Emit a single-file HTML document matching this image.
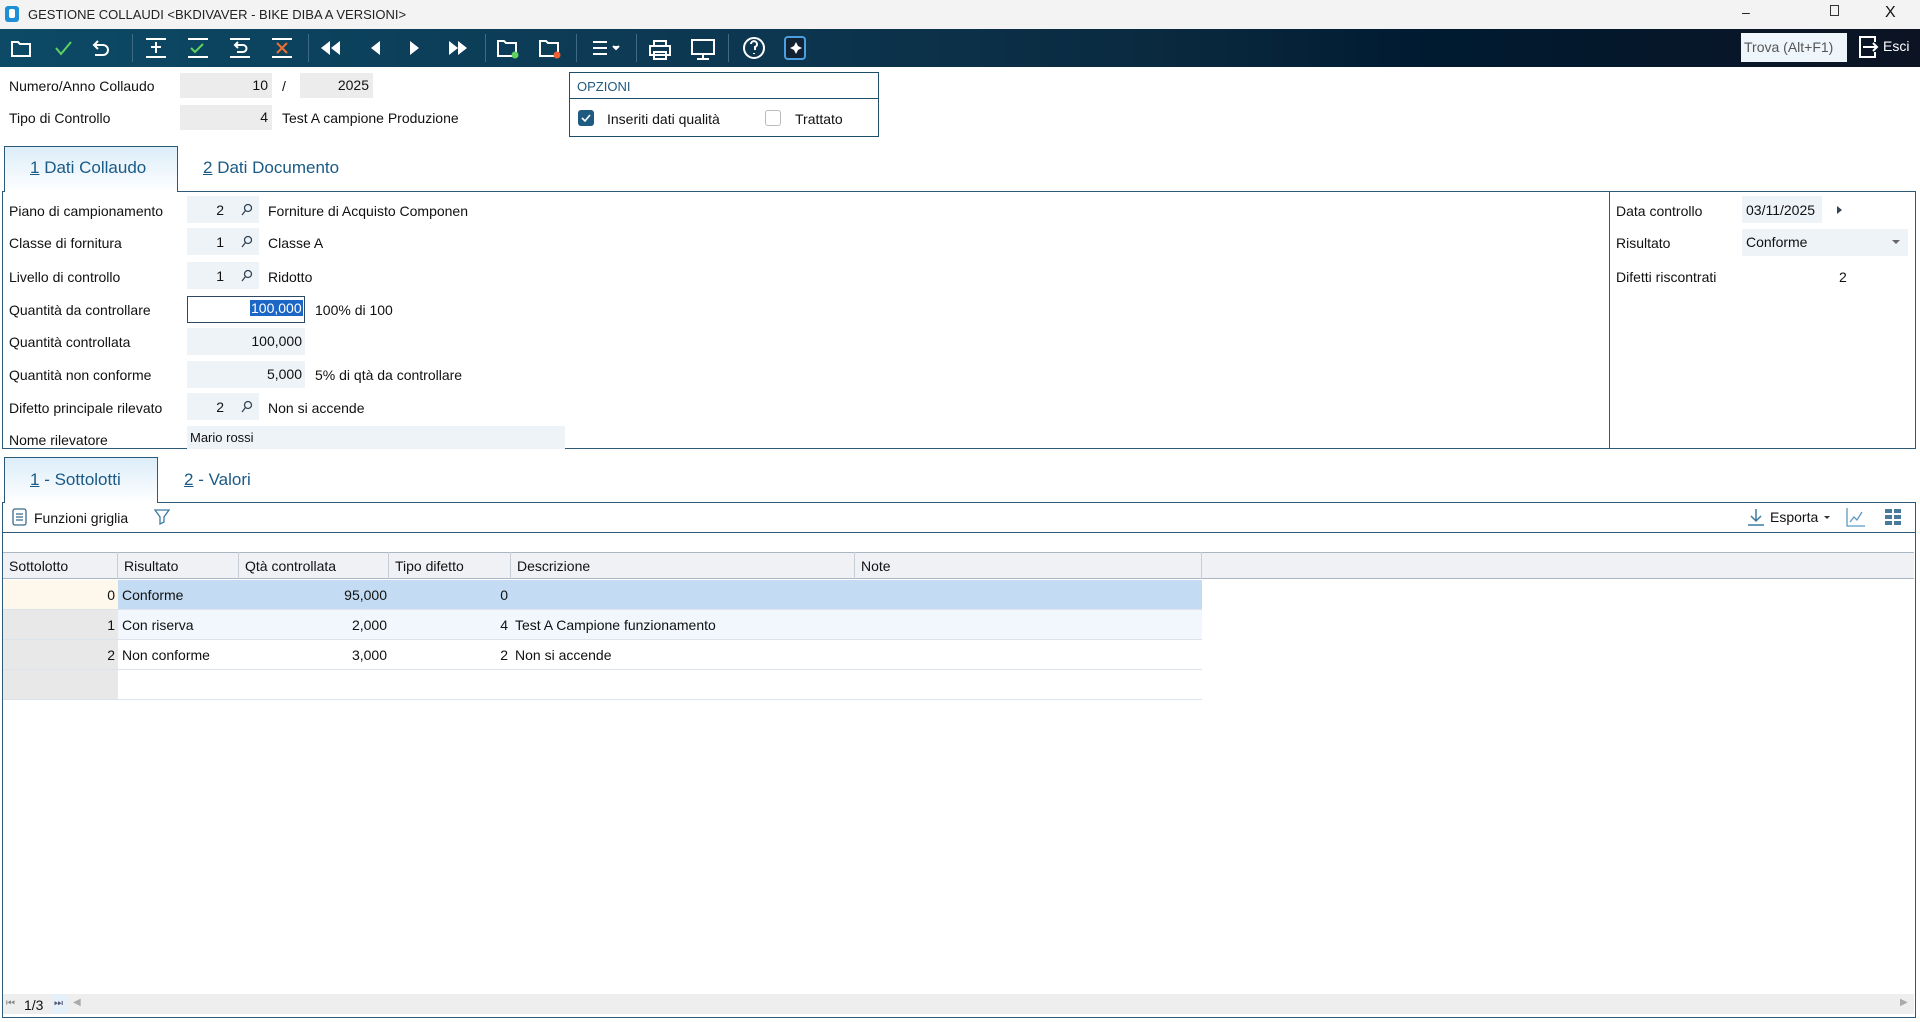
<!DOCTYPE html>
<html><head><meta charset="utf-8">
<style>
*{box-sizing:border-box;margin:0;padding:0}
body{width:1920px;height:1022px;overflow:hidden;background:#fff;font-family:"Liberation Sans",sans-serif;font-size:14px;color:#111;position:relative}
.a{position:absolute;white-space:nowrap}
.box{position:absolute;background:#eef3f8}
.r{text-align:right}
.sep{position:absolute;top:34px;width:1px;height:28px;background:#3e6a82}
.lbl{position:absolute;left:9px}
.mag{position:absolute}
.hdr{position:absolute;top:552px;height:27px;border-right:1px solid #c7ced6;padding:6px 0 0 6px}
.cell{position:absolute;height:30px;padding-top:7px}
</style></head><body>
<div class="a" style="left:0;top:0;width:1920px;height:29px;background:#f3f3f3"></div>
<div class="a" style="left:5px;top:6px;width:14px;height:16px;background:#1e8fd6;border-radius:3px"></div>
<div class="a" style="left:9px;top:9px;width:6px;height:9px;background:#fff;border-radius:2px"></div>
<div class="a" style="left:28px;top:7px;font-size:13px;color:#222">GESTIONE COLLAUDI &lt;BKDIVAVER - BIKE DIBA A VERSIONI&gt;</div>
<div class="a" style="left:1742px;top:4px;font-size:14px">–</div>
<div class="a" style="left:1830px;top:5px;width:9px;height:11px;border:1.5px solid #333"></div>
<div class="a" style="left:1885px;top:4px;font-size:16px">X</div>
<div class="a" style="left:0;top:29px;width:1920px;height:38px;background:linear-gradient(90deg,#0c4a66 0%,#0d3650 40%,#0a2a40 60%,#001a30 75%,#0c1424 100%)"></div>
<svg class="a" style="left:0;top:29px" width="820" height="38" fill="none" stroke="#fff" stroke-width="2">
<path d="M12 13h6l2 2h10v12H12z"/>
<path d="M56 19l5 6 10-12" stroke="#5fd35f"/>
<path d="M98 12l-4 4 4 4M94 16h9a5 5 0 0 1 0 10h-8"/>
<path d="M146 10h20M146 28h20M156 13v11M151 18h10"/>
<path d="M188 10h20M188 28h20"/>
<path d="M191 19l4 4 8-8" stroke="#5fd35f"/>
<path d="M230 10h20M230 28h20M238 13l-3 3 3 3M235 16h8a3 3 0 0 1 0 7h-6"/>
<path d="M272 10h20M272 28h20" /><path d="M277 14l10 10M287 14l-10 10" stroke="#f07030"/>
<path d="M330 12v14l-9-7zM340 12v14l-9-7z" fill="#fff" stroke="none"/>
<path d="M380 12v14l-9-7z" fill="#fff" stroke="none"/>
<path d="M410 12v14l9-7z" fill="#fff" stroke="none"/>
<path d="M449 12v14l9-7zM458 12v14l9-7z" fill="#fff" stroke="none"/>
<path d="M498 12h6l2 2h10v13H498z"/><circle cx="515" cy="26" r="3.5" fill="#5fd35f" stroke="none"/>
<path d="M540 12h6l2 2h10v13H540z"/><circle cx="557" cy="26" r="3.5" fill="#f06030" stroke="none"/>
<path d="M593 13h14M593 19h14M593 25h14"/><path d="M613 17l3 3 3-3" fill="#fff"/>
<path d="M654 12h12v5h-12zM650 17h20v9h-20zM654 23h12v7h-12z"/>
<path d="M692 11h22v14h-22zM703 25v4M697 30h12"/>
<circle cx="754" cy="19" r="10"/><path d="M751 15a3 3 0 1 1 4 3v3M754 24v1"/>
<rect x="785" y="8" width="20" height="22" rx="3" stroke="#4aa0e0" fill="#123"/>
<path d="M796 13l2 4 4 2-4 2-2 4-2-4-4-2 4-2z" fill="#fff" stroke="none"/>
</svg>
<div class="sep" style="left:132px"></div><div class="sep" style="left:308px"></div><div class="sep" style="left:485px"></div><div class="sep" style="left:576px"></div><div class="sep" style="left:636px"></div><div class="sep" style="left:728px"></div>
<div class="a" style="left:1741px;top:33px;width:106px;height:29px;background:#eef6fc;color:#555;padding:6px 0 0 3px;font-size:14px">Trova (Alt+F1)</div>
<svg class="a" style="left:1857px;top:34px" width="24" height="26" fill="none" stroke="#fff" stroke-width="2"><path d="M10 3H3v20h7M10 3h8v5M18 18v5h-8M6 13h14M16 9l4 4-4 4"/></svg>
<div class="a" style="left:1883px;top:38px;color:#fff;font-size:14px">Esci</div>
<div class="lbl" style="top:78px">Numero/Anno Collaudo</div>
<div class="box r" style="left:180px;top:73px;width:92px;height:25px;background:#ececec;padding:4px 4px 0 0">10</div>
<div class="a" style="left:282px;top:78px">/</div>
<div class="box r" style="left:300px;top:73px;width:73px;height:25px;background:#ececec;padding:4px 4px 0 0">2025</div>
<div class="lbl" style="top:110px">Tipo di Controllo</div>
<div class="box r" style="left:180px;top:105px;width:92px;height:25px;background:#ececec;padding:4px 4px 0 0">4</div>
<div class="a" style="left:282px;top:110px">Test A campione Produzione</div>
<div class="a" style="left:569px;top:72px;width:310px;height:65px;border:1.5px solid #1f4e6a"></div>
<div class="a" style="left:569px;top:98px;width:310px;height:1px;background:#1f4e6a"></div>
<div class="a" style="left:577px;top:79px;color:#1f5a80;font-size:13px">OPZIONI</div>
<div class="a" style="left:578px;top:110px;width:16px;height:16px;background:#1f5a80;border-radius:3px"></div>
<svg class="a" style="left:578px;top:110px" width="16" height="16" fill="none" stroke="#fff" stroke-width="1.6"><path d="M4 8l3 3 5-6"/></svg>
<div class="a" style="left:607px;top:111px">Inseriti dati qualità</div>
<div class="a" style="left:765px;top:110px;width:16px;height:16px;border:1px solid #bbb;border-radius:3px"></div>
<div class="a" style="left:795px;top:111px">Trattato</div>
<div class="a" style="left:4px;top:146px;width:174px;height:46px;border:1px solid #2c5a78;border-bottom:none;background:linear-gradient(#dcedf9,#fff);z-index:2"></div>
<div class="a" style="left:30px;top:158px;font-size:17px;color:#1a5a86;z-index:3"><u>1</u> Dati Collaudo</div>
<div class="a" style="left:203px;top:158px;font-size:17px;color:#1a5a86"><u>2</u> Dati Documento</div>
<div class="a" style="left:2px;top:191px;width:1914px;height:258px;border:1.5px solid #2c5a78"></div>
<div class="a" style="left:1609px;top:191px;width:1px;height:258px;background:#2c5a78"></div>
<div class="lbl" style="top:203px">Piano di campionamento</div>
<div class="box r" style="left:187px;top:196px;width:72px;height:27px;padding:6px 35px 0 0">2</div>
<svg class="mag" style="left:241px;top:203px" width="12" height="13" fill="none" stroke="#345" stroke-width="1.3"><circle cx="7" cy="5" r="3.5"/><path d="M4.5 7.5L1 12"/></svg>
<div class="a" style="left:268px;top:203px">Forniture di Acquisto Componen</div>
<div class="lbl" style="top:235px">Classe di fornitura</div>
<div class="box r" style="left:187px;top:228px;width:72px;height:27px;padding:6px 35px 0 0">1</div>
<svg class="mag" style="left:241px;top:235px" width="12" height="13" fill="none" stroke="#345" stroke-width="1.3"><circle cx="7" cy="5" r="3.5"/><path d="M4.5 7.5L1 12"/></svg>
<div class="a" style="left:268px;top:235px">Classe A</div>
<div class="lbl" style="top:269px">Livello di controllo</div>
<div class="box r" style="left:187px;top:262px;width:72px;height:27px;padding:6px 35px 0 0">1</div>
<svg class="mag" style="left:241px;top:269px" width="12" height="13" fill="none" stroke="#345" stroke-width="1.3"><circle cx="7" cy="5" r="3.5"/><path d="M4.5 7.5L1 12"/></svg>
<div class="a" style="left:268px;top:269px">Ridotto</div>
<div class="lbl" style="top:302px">Quantità da controllare</div>
<div class="a" style="left:187px;top:296px;width:118px;height:27px;border:1.5px solid #2c4a66;background:#fff"></div>
<div class="a" style="left:250px;top:300px;background:#1c66c6;color:#fff;padding:0 1px">100,000</div>
<div class="a" style="left:315px;top:302px">100% di 100</div>
<div class="lbl" style="top:334px">Quantità controllata</div>
<div class="box r" style="left:187px;top:328px;width:118px;height:27px;padding:5px 3px 0 0">100,000</div>
<div class="lbl" style="top:367px">Quantità non conforme</div>
<div class="box r" style="left:187px;top:361px;width:118px;height:27px;padding:5px 3px 0 0">5,000</div>
<div class="a" style="left:315px;top:367px">5% di qtà da controllare</div>
<div class="lbl" style="top:400px">Difetto principale rilevato</div>
<div class="box r" style="left:187px;top:393px;width:72px;height:27px;padding:6px 35px 0 0">2</div>
<svg class="mag" style="left:241px;top:400px" width="12" height="13" fill="none" stroke="#345" stroke-width="1.3"><circle cx="7" cy="5" r="3.5"/><path d="M4.5 7.5L1 12"/></svg>
<div class="a" style="left:268px;top:400px">Non si accende</div>
<div class="lbl" style="top:432px">Nome rilevatore</div>
<div class="box" style="left:187px;top:426px;width:378px;height:23px;padding:4px 0 0 3px;font-size:13px">Mario rossi</div>
<div class="a" style="left:1616px;top:203px">Data controllo</div>
<div class="box" style="left:1742px;top:196px;width:80px;height:27px;padding:6px 0 0 4px">03/11/2025</div>
<svg class="a" style="left:1837px;top:206px" width="6" height="8" fill="#345"><path d="M0 0l5 4-5 4z"/></svg>
<div class="a" style="left:1616px;top:235px">Risultato</div>
<div class="box" style="left:1742px;top:229px;width:166px;height:27px;padding:5px 0 0 4px">Conforme</div>
<svg class="a" style="left:1892px;top:240px" width="8" height="5" fill="#666"><path d="M0 0h8l-4 4z"/></svg>
<div class="a" style="left:1616px;top:269px">Difetti riscontrati</div>
<div class="a" style="left:1839px;top:269px">2</div>
<div class="a" style="left:4px;top:457px;width:154px;height:46px;border:1px solid #2c5a78;border-bottom:none;background:linear-gradient(#dcedf9,#fff);z-index:2"></div>
<div class="a" style="left:30px;top:470px;font-size:17px;color:#1a5a86;z-index:3"><u>1</u> - Sottolotti</div>
<div class="a" style="left:184px;top:470px;font-size:17px;color:#1a5a86"><u>2</u> - Valori</div>
<div class="a" style="left:2px;top:502px;width:1914px;height:516px;border:1.5px solid #2c5a78;border-top:1px solid #2c5a78"></div>
<div class="a" style="left:2px;top:532px;width:1914px;height:1px;background:#2c5a78"></div>
<svg class="a" style="left:12px;top:508px" width="16" height="18" fill="none" stroke="#3a6a8a" stroke-width="1.3"><rect x="1" y="1" width="13" height="16" rx="2"/><path d="M4 6h7M4 9h7M4 12h7"/></svg>
<div class="a" style="left:34px;top:510px">Funzioni griglia</div>
<svg class="a" style="left:154px;top:508px" width="16" height="18" fill="none" stroke="#3a7aa0" stroke-width="1.3"><path d="M1 2h14l-5 7v5l-4 2V9z"/></svg>
<svg class="a" style="left:1746px;top:507px" width="20" height="20" fill="none" stroke="#3a7aa0" stroke-width="1.5"><path d="M10 2v12M5 9l5 5 5-5M2 18h16"/></svg>
<div class="a" style="left:1770px;top:509px">Esporta</div>
<svg class="a" style="left:1824px;top:516px" width="6" height="4" fill="#333"><path d="M0 0h6l-3 3z"/></svg>
<svg class="a" style="left:1846px;top:507px" width="20" height="20" fill="none" stroke="#5a9ac0" stroke-width="1.3"><path d="M1 1v18h18M4 15l4-5 3 3 5-8"/></svg>
<svg class="a" style="left:1885px;top:509px" width="16" height="16" fill="#4a7a9a"><rect x="0" y="0" width="7" height="4"/><rect x="9" y="0" width="7" height="4"/><rect x="0" y="6" width="7" height="4"/><rect x="9" y="6" width="7" height="4"/><rect x="0" y="12" width="7" height="4"/><rect x="9" y="12" width="7" height="4"/></svg>
<div class="a" style="left:3px;top:552px;width:1911px;height:27px;background:#eff1f4;border-top:1px solid #a9b6c4;border-bottom:1px solid #a9b6c4"></div>
<div class="hdr" style="left:3px;width:115px">Sottolotto</div>
<div class="hdr" style="left:118px;width:121px">Risultato</div>
<div class="hdr" style="left:239px;width:150px">Qtà controllata</div>
<div class="hdr" style="left:389px;width:122px">Tipo difetto</div>
<div class="hdr" style="left:511px;width:344px">Descrizione</div>
<div class="hdr" style="left:855px;width:347px">Note</div>
<div class="a" style="left:3px;top:580px;width:115px;height:29px;background:#fdf7ec"></div>
<div class="a" style="left:118px;top:580px;width:1084px;height:29px;background:#c3dcf4"></div>
<div class="a" style="left:3px;top:610px;width:115px;height:29px;background:#e8e8e8"></div>
<div class="a" style="left:118px;top:610px;width:1084px;height:29px;background:#f1f7fc"></div>
<div class="a" style="left:3px;top:640px;width:115px;height:29px;background:#e8e8e8"></div>
<div class="a" style="left:3px;top:670px;width:115px;height:29px;background:#e8e8e8"></div>
<div class="a" style="left:3px;top:609px;width:1199px;height:1px;background:#dde3ea"></div>
<div class="a" style="left:3px;top:639px;width:1199px;height:1px;background:#dde3ea"></div>
<div class="a" style="left:3px;top:669px;width:1199px;height:1px;background:#dde3ea"></div>
<div class="a" style="left:3px;top:699px;width:1199px;height:1px;background:#dde3ea"></div>
<div class="cell r" style="left:3px;top:580px;width:112px">0</div>
<div class="cell" style="left:122px;top:580px">Conforme</div>
<div class="cell r" style="left:239px;top:580px;width:148px">95,000</div>
<div class="cell r" style="left:389px;top:580px;width:119px">0</div>
<div class="cell r" style="left:3px;top:610px;width:112px">1</div>
<div class="cell" style="left:122px;top:610px">Con riserva</div>
<div class="cell r" style="left:239px;top:610px;width:148px">2,000</div>
<div class="cell r" style="left:389px;top:610px;width:119px">4</div>
<div class="cell" style="left:515px;top:610px">Test A Campione funzionamento</div>
<div class="cell r" style="left:3px;top:640px;width:112px">2</div>
<div class="cell" style="left:122px;top:640px">Non conforme</div>
<div class="cell r" style="left:239px;top:640px;width:148px">3,000</div>
<div class="cell r" style="left:389px;top:640px;width:119px">2</div>
<div class="cell" style="left:515px;top:640px">Non si accende</div>
<div class="a" style="left:3px;top:994px;width:1911px;height:20px;background:#eeeeee"></div>
<div class="a" style="left:52px;top:994px;width:15px;height:20px;background:#e6f0f8"></div>
<div class="a" style="left:6px;top:998px;font-size:10px;color:#888">⏮</div>
<div class="a" style="left:24px;top:997px;font-size:14px">1/3</div>
<div class="a" style="left:54px;top:998px;font-size:10px;color:#557">⏭</div>
<div class="a" style="left:73px;top:997px;font-size:10px;color:#aaa">◀</div>
<div class="a" style="left:1900px;top:997px;font-size:10px;color:#aaa">▶</div>
</body></html>
